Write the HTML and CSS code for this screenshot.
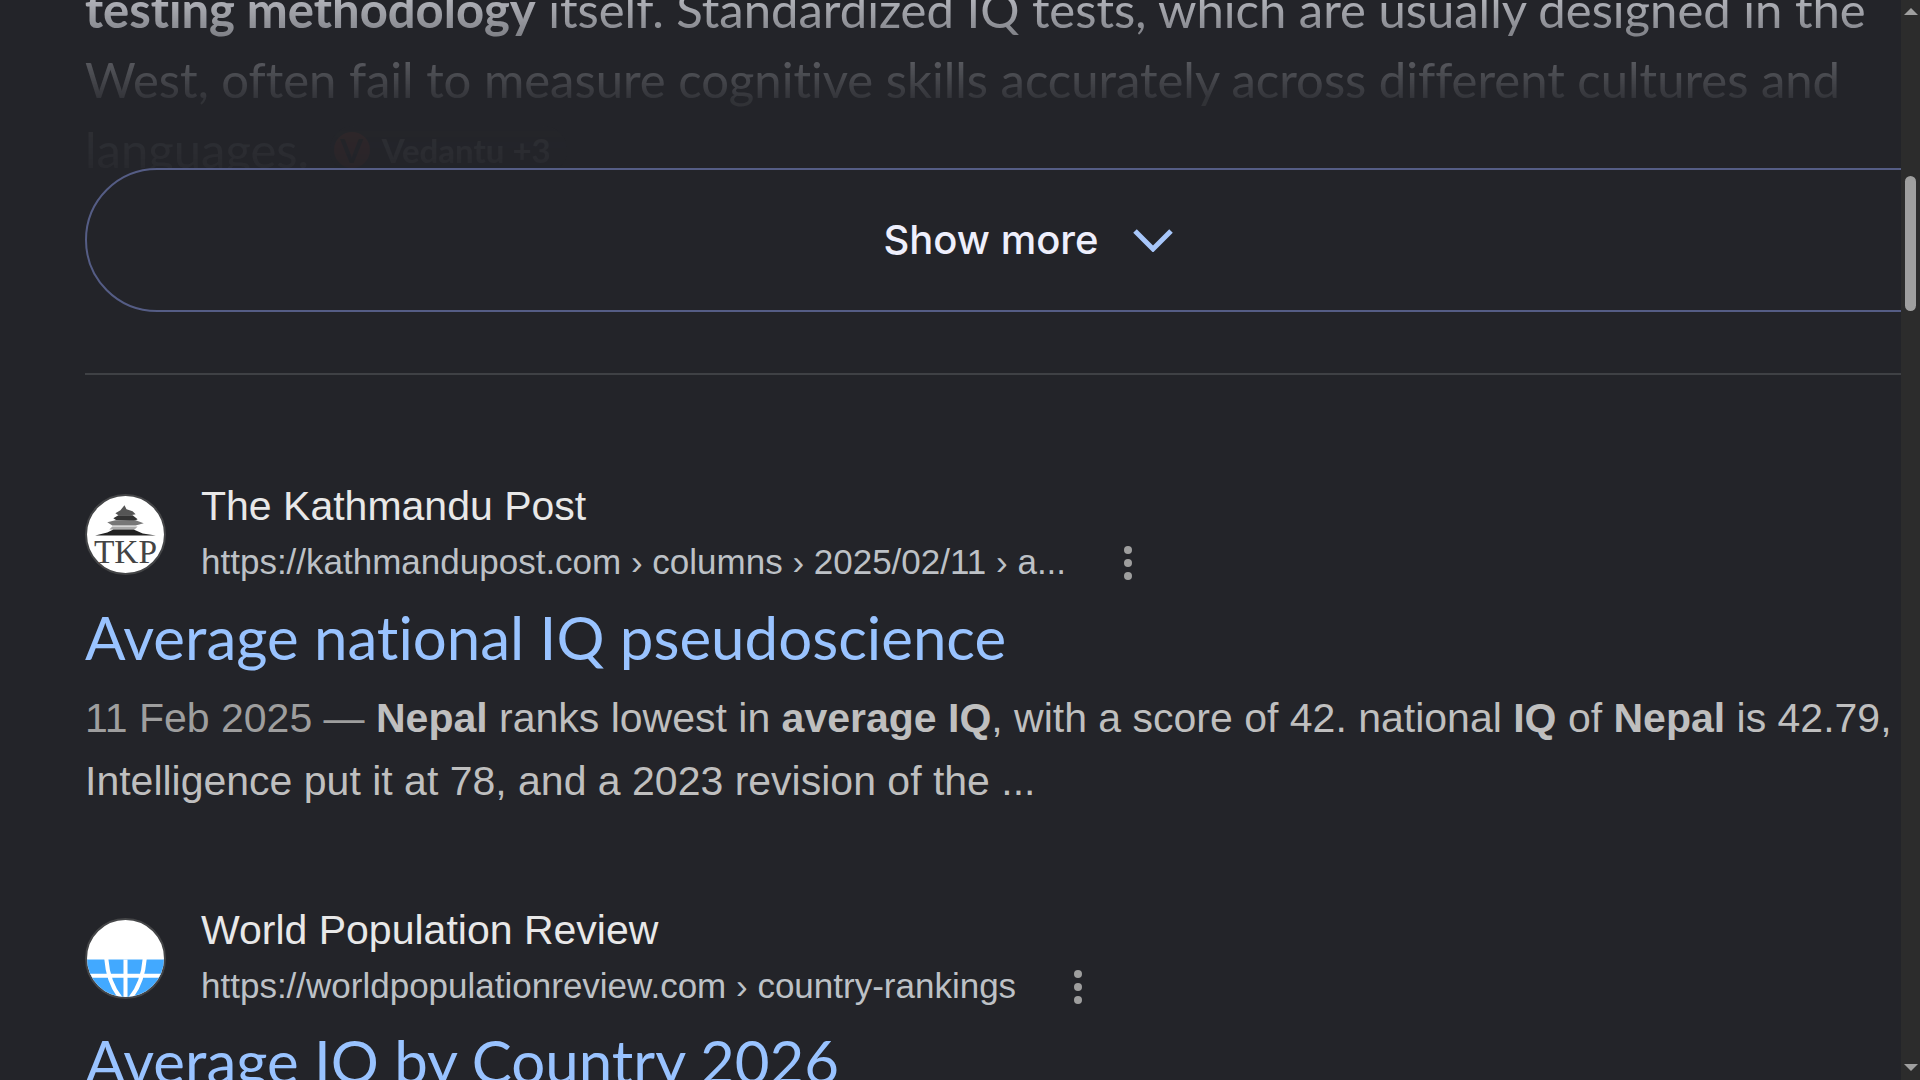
FILE: index.html
```html
<!DOCTYPE html>
<html lang="en">
<head>
  <meta charset="UTF-8">
  <meta name="viewport" content="width=device-width, initial-scale=1.0">
  <title>average iq of nepal - Search</title>
  <link rel="stylesheet" href="styles.css">
</head>
<body>
  <main>
    <section class="overview">
      <div class="overview-text">
        <p>
          <b>testing methodology</b> itself. Standardized IQ tests, which are usually designed in the<br>
          West, often fail to measure cognitive skills accurately across different cultures and<br>
          languages. <a href="#" class="source"><span class="source-icon">V</span>Vedantu +3</a>
        </p>
      </div>
      <button type="button" class="show-more">
        Show more
        <svg class="chevron" viewBox="0 0 40 24" aria-hidden="true">
          <path d="M2 4 L20 22 L38 4" fill="none" stroke="#a8c7fa" stroke-width="5"/>
        </svg>
      </button>
    </section>

    <hr>

    <article class="result">
      <div class="site">
        <svg class="favicon" viewBox="0 0 80 80" aria-hidden="true">
          <circle cx="40" cy="40" r="39" fill="#fff" stroke="#444547" stroke-width="2"/>
          <path d="M39 11 l2 4 6 2 3 3 -5 1 h-12 l-3 -2 5 -3z" fill="#555"/>
          <path d="M33 21 h14 l5 4 -4 2 -17 -1 -3 -2z" fill="#333"/>
          <path d="M22 28 l8 -2 h20 l8 3 -8 2 H27z" fill="#777"/>
          <path d="M27 32 h25 l-3 3 H24z" fill="#aaa"/>
          <path d="M10 41 l12 -3 6 -3 h20 l9 4 13 2z" fill="#222"/>
          <text x="40" y="68" class="favicon-text">TKP</text>
        </svg>
        <div class="site-info">
          <div class="site-name">The Kathmandu Post</div>
          <div class="site-url">
            <cite>https://kathmandupost.com › columns › 2025/02/11 › a...</cite>
            <button type="button" class="menu" aria-label="About this result">
              <svg viewBox="0 0 12 36"><circle cx="6" cy="5" r="4"/><circle cx="6" cy="18" r="4"/><circle cx="6" cy="31" r="4"/></svg>
            </button>
          </div>
        </div>
      </div>
      <h3><a href="#">Average national IQ pseudoscience</a></h3>
      <p class="snippet">
        <span class="date">11 Feb 2025 — </span><b>Nepal</b> ranks lowest in <b>average IQ</b>, with a score of 42. national <b>IQ</b> of <b>Nepal</b> is 42.79,<br>
        Intelligence put it at 78, and a 2023 revision of the ...
      </p>
    </article>

    <article class="result">
      <div class="site">
        <svg class="favicon" viewBox="0 0 80 80" aria-hidden="true">
          <clipPath id="globe"><circle cx="40" cy="40" r="38"/></clipPath>
          <circle cx="40" cy="40" r="39" fill="#fff" stroke="#444547" stroke-width="2"/>
          <g clip-path="url(#globe)">
            <rect y="41" width="80" height="39" fill="#42a9ff"/>
            <path d="M0 57 H80 M40 41 V80 M21 40 Q23 65 36 80 M59 40 Q57 65 44 80" fill="none" stroke="#fff" stroke-width="4"/>
          </g>
        </svg>
        <div class="site-info">
          <div class="site-name">World Population Review</div>
          <div class="site-url">
            <cite>https://worldpopulationreview.com › country-rankings</cite>
            <button type="button" class="menu" aria-label="About this result">
              <svg viewBox="0 0 12 36"><circle cx="6" cy="5" r="4"/><circle cx="6" cy="18" r="4"/><circle cx="6" cy="31" r="4"/></svg>
            </button>
          </div>
        </div>
      </div>
      <h3><a href="#">Average IQ by Country 2026</a></h3>
    </article>
  </main>

  <div class="scrollbar" aria-hidden="true">
    <svg viewBox="0 0 14 8"><path d="M0 7 L7 0 L14 7z"/></svg>
    <div class="track"><div class="thumb"></div></div>
    <svg viewBox="0 0 14 8"><path d="M0 0 H14 L7 7z"/></svg>
  </div>
</body>
</html>
```
FILE: styles.css
```css
* {
  box-sizing: border-box;
}
body {
  margin: 0;
  height: 100vh;
  display: grid;
  grid-template-columns: 1fr 19px;
  overflow: hidden;
  background-color: #232429;
  color: #bfbfbf;
  font-family: "Liberation Sans", Arial, sans-serif;
  font-size: 41px;
  font-variant-ligatures: none;
}
main {
  height: 100vh;
  overflow: hidden;
  padding-left: 85px;
}
button {
  background: none;
  border: none;
  padding: 0;
  cursor: pointer;
}
a {
  color: inherit;
  text-decoration: none;
}
p, h3 {
  margin: 0;
  white-space: nowrap;
}

/* overview */
.overview {
  margin-right: -70px;
  font-family: Lato, sans-serif;
}
.overview-text {
  height: 168px;
  overflow: hidden;
  -webkit-mask-image: linear-gradient(rgba(0,0,0,.75), rgba(0,0,0,.5) 35px, rgba(0,0,0,.26) 65px, rgba(0,0,0,.08) 100px, rgba(0,0,0,.03) 168px);
  mask-image: linear-gradient(rgba(0,0,0,.75), rgba(0,0,0,.5) 35px, rgba(0,0,0,.26) 65px, rgba(0,0,0,.08) 100px, rgba(0,0,0,.03) 168px);
}
.overview-text p {
  margin-top: -26px;
  color: #dfe1e8;
  font-size: 49px;
  line-height: 70px;
}
.source {
  display: inline-flex;
  align-items: center;
  gap: 12px;
  height: 48px;
  margin-left: 8px;
  padding: 0 16px 0 4px;
  border-radius: 24px;
  background-color: #2e3036;
  font-size: 33px;
  font-weight: bold;
  line-height: 48px;
  vertical-align: 5px;
}
.source-icon {
  width: 36px;
  height: 36px;
  border-radius: 50%;
  background-color: #e04a32;
  color: #232429;
  text-align: center;
  line-height: 36px;
}
.show-more {
  display: flex;
  align-items: center;
  justify-content: center;
  gap: 34px;
  width: 100%;
  height: 144px;
  padding-bottom: 2px;
  border: 2px solid #555d85;
  border-radius: 72px;
  color: #eeeffc;
  font-family: Inter, sans-serif;
  font-size: 40px;
  font-weight: 500;
}
.chevron {
  width: 40px;
  height: 26px;
}
hr {
  margin: 61px 0 14px;
  border: none;
  border-top: 2px solid #3f4145;
}

/* results */
.result {
  padding-top: 87px;
}
.site {
  display: flex;
  align-items: center;
  gap: 35px;
  height: 114px;
}
.favicon {
  width: 81px;
  height: 81px;
  margin-top: 2px;
}
.favicon-text {
  font-family: "Liberation Serif", serif;
  font-size: 33px;
  text-anchor: middle;
  fill: #444;
}
.site-name {
  color: #e8e8e8;
  font-size: 41px;
  line-height: 58px;
}
.site-url {
  display: flex;
  align-items: center;
  gap: 56px;
  color: #bdc1c6;
  font-size: 35px;
  line-height: 54px;
}
cite {
  font-style: normal;
}
.menu {
  display: flex;
  padding-top: 2px;
}
.menu svg {
  width: 12px;
  height: 36px;
  fill: #9e9e9e;
}
h3 {
  padding: 8px 0 11px;
  color: #99c3ff;
  font-family: Lato, sans-serif;
  font-size: 60px;
  font-weight: normal;
  line-height: 78px;
}
.snippet {
  line-height: 63px;
}
.date {
  color: #9e9e9e;
}

/* scrollbar */
.scrollbar {
  display: flex;
  flex-direction: column;
  align-items: center;
  padding: 8px 0;
  background-color: #2c2c2c;
}
.scrollbar svg {
  width: 14px;
  height: 8px;
  fill: #9f9f9f;
}
.track {
  flex: 1;
  padding-top: 160px;
}
.thumb {
  width: 11px;
  height: 135px;
  border-radius: 6px;
  background-color: #9f9f9f;
}
```
